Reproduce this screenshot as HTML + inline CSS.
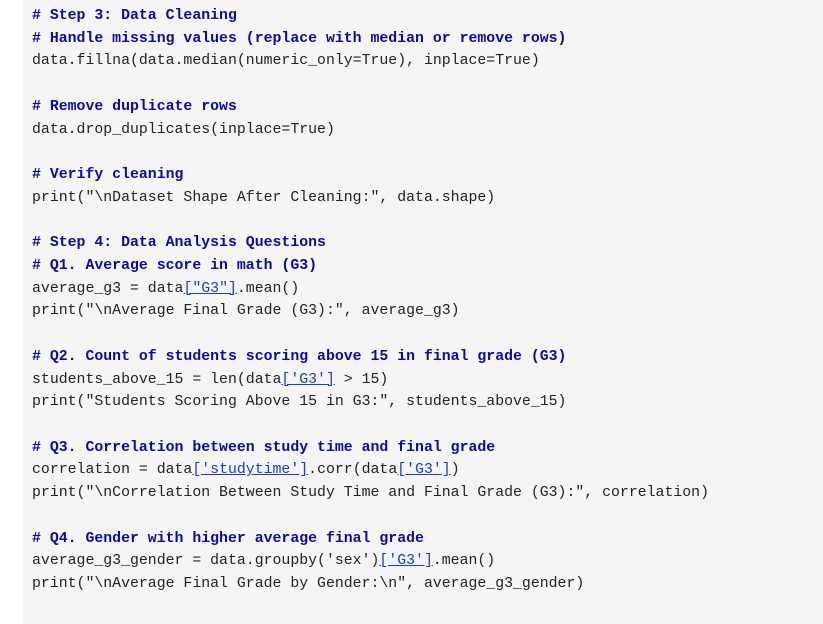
<!DOCTYPE html>
<html><head><style>
html,body{margin:0;padding:0;background:#fff;width:823px;height:624px;overflow:hidden}
.b{position:absolute;left:23px;top:0;right:0;bottom:0;background:#f5f5f5}
pre{position:absolute;left:32px;top:5px;margin:0;font-family:"Liberation Mono",monospace;font-size:14.85px;line-height:22.72px;color:#222}
.c{color:#0b0b9e;font-weight:bold}
a{color:#1a3fc0;text-decoration:underline}
</style></head><body>
<div class="b"></div>
<pre><span class="c"># Step 3: Data Cleaning</span>
<span class="c"># Handle missing values (replace with median or remove rows)</span>
data.fillna(data.median(numeric_only=True), inplace=True)

<span class="c"># Remove duplicate rows</span>
data.drop_duplicates(inplace=True)

<span class="c"># Verify cleaning</span>
print("\nDataset Shape After Cleaning:", data.shape)

<span class="c"># Step 4: Data Analysis Questions</span>
<span class="c"># Q1. Average score in math (G3)</span>
average_g3 = data<a>["G3"]</a>.mean()
print("\nAverage Final Grade (G3):", average_g3)

<span class="c"># Q2. Count of students scoring above 15 in final grade (G3)</span>
students_above_15 = len(data<a>['G3']</a> &gt; 15)
print("Students Scoring Above 15 in G3:", students_above_15)

<span class="c"># Q3. Correlation between study time and final grade</span>
correlation = data<a>['studytime']</a>.corr(data<a>['G3']</a>)
print("\nCorrelation Between Study Time and Final Grade (G3):", correlation)

<span class="c"># Q4. Gender with higher average final grade</span>
average_g3_gender = data.groupby('sex')<a>['G3']</a>.mean()
print("\nAverage Final Grade by Gender:\n", average_g3_gender)</pre>
</body></html>
